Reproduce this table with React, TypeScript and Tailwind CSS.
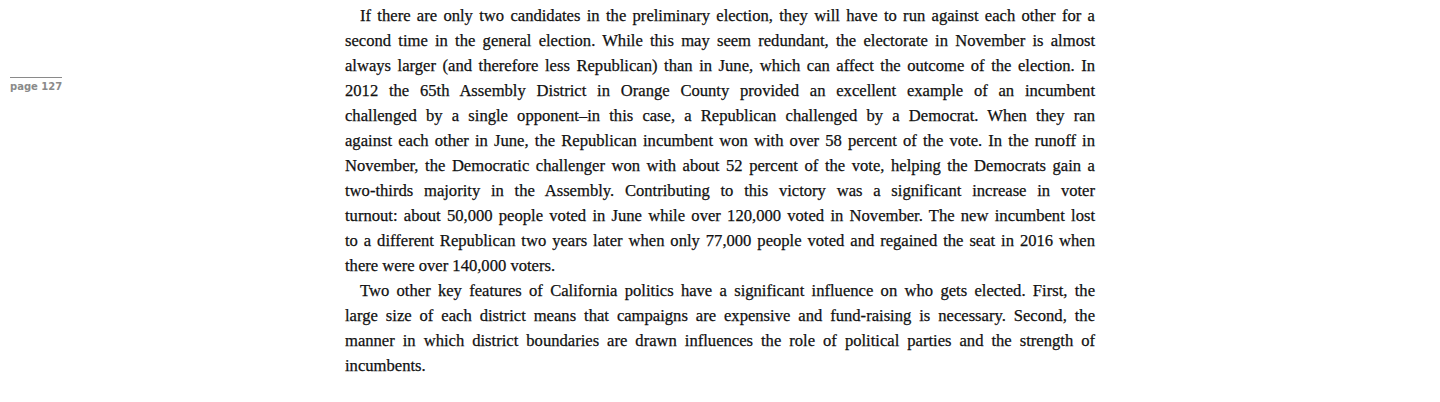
import React from 'react';

// Lines are set by hand so the breaks match the printed page
const paragraphs: string[][] = [
    [
        'If there are only two candidates in the preliminary election, they will have to run against each other for a',
        'second time in the general election. While this may seem redundant, the electorate in November is almost',
        'always larger (and therefore less Republican) than in June, which can affect the outcome of the election. In',
        '2012 the 65th Assembly District in Orange County provided an excellent example of an incumbent',
        'challenged by a single opponent\u2013in this case, a Republican challenged by a Democrat. When they ran',
        'against each other in June, the Republican incumbent won with over 58 percent of the vote. In the runoff in',
        'November, the Democratic challenger won with about 52 percent of the vote, helping the Democrats gain a',
        'two-thirds majority in the Assembly. Contributing to this victory was a significant increase in voter',
        'turnout: about 50,000 people voted in June while over 120,000 voted in November. The new incumbent lost',
        'to a different Republican two years later when only 77,000 people voted and regained the seat in 2016 when',
        'there were over 140,000 voters.',
    ],
    [
        'Two other key features of California politics have a significant influence on who gets elected. First, the',
        'large size of each district means that campaigns are expensive and fund-raising is necessary. Second, the',
        'manner in which district boundaries are drawn influences the role of political parties and the strength of',
        'incumbents.',
    ],
];

const App: React.FC = () => {
    return (
        <div className="relative h-[402px] w-[1440px] bg-white">
            {/* Page marker in the margin */}
            <div className="absolute left-[10px] top-[77px] w-[52px] whitespace-nowrap border-t border-[#8a8a8a] pt-[3px] font-['DejaVu_Sans',sans-serif] text-[10px] font-bold leading-[12px] text-[#8a8a8a]">
                page 127
            </div>

            <div className="ml-[345px] w-[750px] pt-[3px] font-['Liberation_Serif',serif] text-[16.6px] leading-[25px] text-[#111] [-webkit-text-stroke:0.25px_#111]">
                {paragraphs.map((lines, p) => (
                    <p key={p}>
                        {lines.map((line, i) => {
                            const last = i === lines.length - 1;
                            return (
                                <span
                                    key={i}
                                    className={`block whitespace-nowrap ${i === 0 ? 'pl-[15px]' : ''} ${last ? 'text-left' : 'text-justify [text-align-last:justify]'}`}
                                >
                                    {line}
                                </span>
                            );
                        })}
                    </p>
                ))}
            </div>
        </div>
    );
};

export default App;
